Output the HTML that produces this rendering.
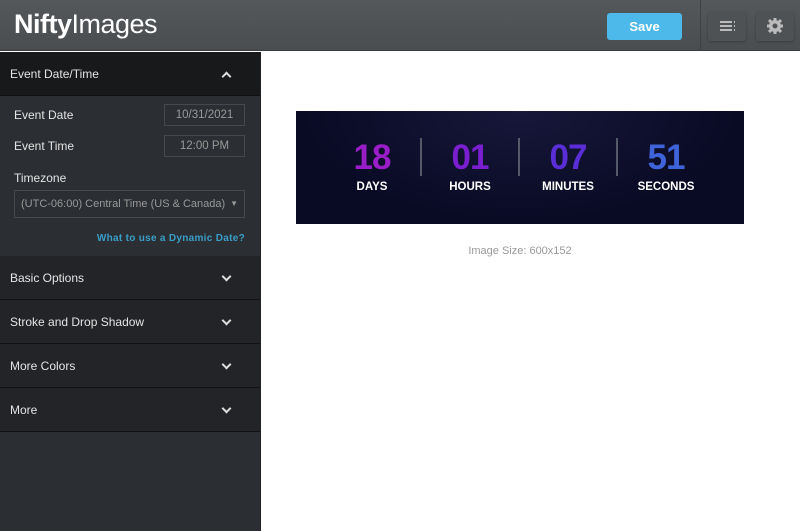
<!DOCTYPE html><html><head><style>
*{margin:0;padding:0;box-sizing:border-box}
body{width:800px;height:531px;overflow:hidden;font-family:"Liberation Sans",sans-serif;background:#fff;position:relative}
.hdr{position:absolute;left:0;top:0;width:800px;height:51px;background:linear-gradient(#55585b,#4a4d50);border-bottom:1px solid #3a3c3f}
.logo{position:absolute;left:14px;top:9px;color:#fff;font-size:27px;letter-spacing:-0.5px}
.save{position:absolute;left:607px;top:13px;width:75px;height:27px;background:#4db8ea;border-radius:3px;color:#fff;font-weight:bold;font-size:13px;text-align:center;line-height:27px}
.div{position:absolute;left:700px;top:0;width:1px;height:51px;background:#3f4245}
.ib{position:absolute;top:12px;width:38px;height:29px;background:#4f5255;border-radius:3px;box-shadow:0 1px 2px #3a3c3e}
.side{position:absolute;left:0;top:52px;width:261px;height:479px;background:#2b2e33;border-right:1px solid #222}
.sh{height:44px;line-height:44px;padding-left:10px;color:#e4e4e4;font-size:12px;position:relative;border-bottom:1px solid #111}
.sh.a{background:#18191b}
.sh.c{background:#222427}
.chev{position:absolute;left:223px;top:17px;width:7px;height:7px;border-right:2px solid #ddd;border-bottom:2px solid #ddd;transform:rotate(45deg)}
.chev.up{transform:rotate(225deg);top:21px}
.body{height:160px;position:relative;color:#e4e4e4;font-size:12px}
.lbl{position:absolute;left:14px}
.inp{position:absolute;left:164px;width:81px;height:22px;border:1px solid #45484d;color:#999;font-size:11.5px;text-align:center;line-height:20px}
.sel{position:absolute;left:14px;top:94px;width:231px;height:28px;border:1px solid #45484d;color:#999;font-size:11px;line-height:26px;padding-left:6px}
.img{position:absolute;left:296px;top:111px;width:448px;height:113px;background:radial-gradient(ellipse at 50% 0%,#17183a,#090a24 70%)}
.u{position:absolute;top:28px;text-align:center;width:80px;color:#fff;font-weight:bold}
.u b{display:block;font-size:35px;line-height:38px;font-family:"Liberation Sans",sans-serif;letter-spacing:-1px}
.u span{font-size:11.5px}
.bar{position:absolute;top:27px;width:2px;height:38px;background:#555a6a}
</style></head><body>
<div class="hdr"><div class="logo"><b>Nifty</b>Images</div><div class="save">Save</div><div class="div"></div>
<div class="ib" style="left:708px"><svg width="38" height="29"><g stroke="#bbb" stroke-width="2"><line x1="12" y1="10" x2="24" y2="10"/><line x1="12" y1="14" x2="24" y2="14"/><line x1="12" y1="18" x2="24" y2="18"/><line x1="26" y1="10" x2="27" y2="10"/><line x1="26" y1="14" x2="27" y2="14"/><line x1="26" y1="18" x2="27" y2="18"/></g></svg></div>
<div class="ib" style="left:756px"><svg width="38" height="29"><g transform="translate(19,14)" fill="#bbb"><circle r="6"/><g stroke="#bbb" stroke-width="3"><line x1="0" y1="-8" x2="0" y2="8"/><line x1="-8" y1="0" x2="8" y2="0"/><line x1="-6" y1="-6" x2="6" y2="6"/><line x1="-6" y1="6" x2="6" y2="-6"/></g><circle r="2.5" fill="#4f5255"/></g></svg></div>
</div>
<div class="side">
<div class="sh a">Event Date/Time<div class="chev up"></div></div>
<div class="body">
<div class="lbl" style="top:12px">Event Date</div><div class="inp" style="top:8px">10/31/2021</div>
<div class="lbl" style="top:43px">Event Time</div><div class="inp" style="top:39px">12:00 PM</div>
<div class="lbl" style="top:75px">Timezone</div>
<div class="sel">(UTC-06:00) Central Time (US &amp; Canada)<span style="position:absolute;right:6px;font-size:8px">▼</span></div>
<div style="position:absolute;right:15px;top:137px;color:#3a9fc9;font-weight:bold;font-size:10px;letter-spacing:.3px">What to use a Dynamic Date?</div>
</div>
<div class="sh c">Basic Options<div class="chev"></div></div>
<div class="sh c">Stroke and Drop Shadow<div class="chev"></div></div>
<div class="sh c">More Colors<div class="chev"></div></div>
<div class="sh c">More<div class="chev"></div></div>
</div>
<div class="img">
<div class="u" style="left:36px"><b style="color:#9a1ec8">18</b><span>DAYS</span></div>
<div class="bar" style="left:124px"></div>
<div class="u" style="left:134px"><b style="color:#7a1fd0">01</b><span>HOURS</span></div>
<div class="bar" style="left:222px"></div>
<div class="u" style="left:232px"><b style="color:#5a2ed6">07</b><span>MINUTES</span></div>
<div class="bar" style="left:320px"></div>
<div class="u" style="left:330px"><b style="color:#3f63d8">51</b><span>SECONDS</span></div>
</div>
<div style="position:absolute;left:296px;width:448px;top:245px;text-align:center;color:#999;font-size:11px">Image Size: 600x152</div>
</body></html>
